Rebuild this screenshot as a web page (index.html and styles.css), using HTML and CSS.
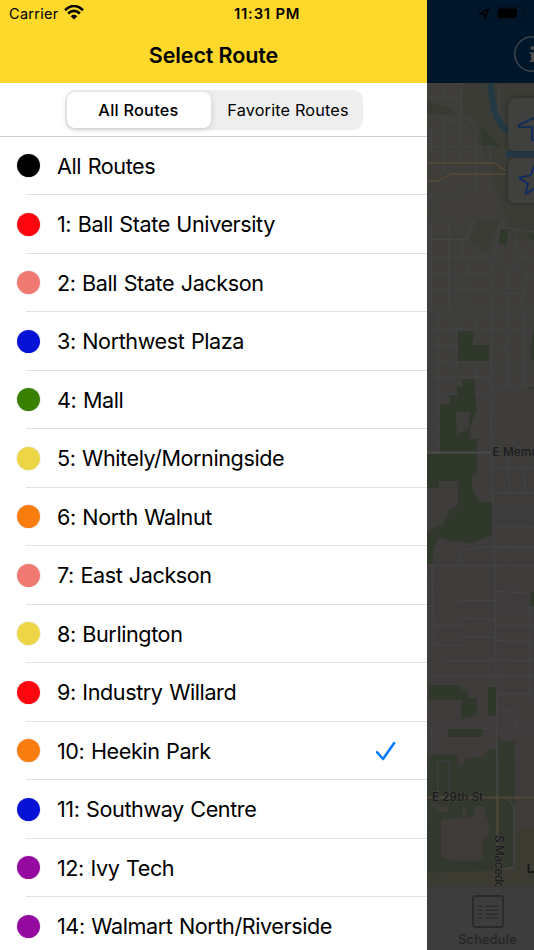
FILE: index.html
```html
<!DOCTYPE html>
<html lang="en">
<head>
<meta charset="utf-8">
<title>Select Route</title>
<link rel="stylesheet" href="styles.css">
</head>
<body>
<div class="screen">
  <aside class="drawer">
    <header class="header">
      <div class="status">
        <span class="carrier">Carrier</span>
        <svg class="wifi" viewBox="0 0 20 15" width="20" height="15">
          <path d="M1 5.2 Q10 -3.2 19 5.2 M4.1 8.5 Q10 3.1 15.9 8.5" fill="none" stroke="#000" stroke-width="2.6"/>
          <path d="M6.7 11.2 Q10 8.4 13.3 11.2 L10 14.5Z"/>
        </svg>
        <span class="time">11:31 PM</span>
      </div>
      <h1 class="title">Select Route</h1>
    </header>
    <div class="filter">
      <div class="segments">
        <button class="segment active"><span>All Routes</span></button>
        <button class="segment"><span>Favorite Routes</span></button>
      </div>
    </div>
    <ul class="routes">
      <li class="route"><i class="dot black"></i><span>All Routes</span></li>
      <li class="route"><i class="dot red"></i><span>1: Ball State University</span></li>
      <li class="route"><i class="dot pink"></i><span>2: Ball State Jackson</span></li>
      <li class="route"><i class="dot blue"></i><span>3: Northwest Plaza</span></li>
      <li class="route"><i class="dot green"></i><span>4: Mall</span></li>
      <li class="route"><i class="dot yellow"></i><span>5: Whitely/Morningside</span></li>
      <li class="route"><i class="dot orange"></i><span>6: North Walnut</span></li>
      <li class="route"><i class="dot pink"></i><span>7: East Jackson</span></li>
      <li class="route"><i class="dot yellow"></i><span>8: Burlington</span></li>
      <li class="route"><i class="dot red"></i><span>9: Industry Willard</span></li>
      <li class="route"><i class="dot orange"></i><span>10: Heekin Park</span>
        <svg class="check" viewBox="0 0 22 20" width="22" height="20"><path d="M2 11.2 L8 18 L19.2 2" fill="none" stroke="#007aff" stroke-width="2.5" stroke-linecap="round" stroke-linejoin="round"/></svg>
      </li>
      <li class="route"><i class="dot blue"></i><span>11: Southway Centre</span></li>
      <li class="route"><i class="dot purple"></i><span>12: Ivy Tech</span></li>
      <li class="route"><i class="dot purple"></i><span>14: Walmart North/Riverside</span></li>
    </ul>
  </aside>
  <main class="backdrop">
    <div class="navbar">
      <svg viewBox="427 0 107 83" width="107" height="83">
        <path d="M479.5 13.7 L488.8 9 L484.7 18.6 L484.2 14.2Z" fill="none" stroke="#000" stroke-width="1.5" stroke-linejoin="round"/>
        <rect x="496.3" y="6.8" width="27" height="13" rx="3.8" fill="none" stroke="#04101d" stroke-width="1.2"/>
        <rect x="498" y="8.5" width="19" height="9.6" rx="2" fill="#000"/>
        <path d="M525 11 Q528 13.3 525 15.8Z" fill="#04101d"/>
        <circle cx="532" cy="54" r="17.2" fill="none" stroke="#494b4e" stroke-width="1.3"/>
        <circle cx="532.3" cy="48" r="2" fill="#4b4d50"/>
        <path d="M529.5 52.3 H534 V62 H529.5 V60.5 H531 V53.8 H529.5Z" fill="#4b4d50"/>
      </svg>
    </div>
    <svg class="map" viewBox="427 83 107 803" width="107" height="803">
      <defs>
        <linearGradient id="land" x1="0" y1="0" x2="0" y2="1">
          <stop offset="0" stop-color="#3f3e3b"/><stop offset="1" stop-color="#3e3b3a"/>
        </linearGradient>
      </defs>
      <rect x="427" y="83" width="107" height="803" fill="url(#land)"/>
      <g fill="#363a31">
        <path d="M464 83 H534 V240 H512 L503 210 L482 150 L461 115Z" opacity=".55"/>
        <path d="M427 101 L445 107 L458 115 L427 114Z"/>
        <path d="M480 125 L500 147 H483Z" fill="#30392b"/>
        <path d="M479 220 H500 L488 252 L469 245 L471 232 L476 230Z" opacity=".6"/>
      </g>
      <path d="M490 83 L493 103 Q496 124 509 131 M506 154 H534" fill="none" stroke="#243946" stroke-width="6"/>
      <g fill="none" stroke="#444446" stroke-width="1">
        <path d="M431 97 H461 M445 97 V88 M461 83 V162 M464 117 L472 121 L476 129 V190 M444 121 H461 M444 121 V146 M431 130 H461 M431 130 V147 H495 M444 147 V171 L448 174 M490 148 V188 M499 83 V112 L508 124 M427 195 H451 L476 188 M431 205 L438 220"/>
        <path d="M443 220 L467 239 L491 259 L534 278 M473 220 L467 239 M427 239.500 H467 M427 257 H489 M427 274 H491 M427 290 H491 M427 312 H534 M427 329 H491 M427 345 H457 M427 362 H491 M427 377 H491 M427 394 H490 M431 220 V312 M449 220 V311 M462 240 V257 M469 257 V274 M464 274 V311 M491 258 V452 M438 312 V451 M456 312 V377 M474 312 L476 329 M476 363 V377 M501 220 L494 260 M501 227 L534 232 M517 229 L513 265 L507 275 V385 M534 239 L523 255 L515 269 M520 256 L534 262 M499 293 H522 M528 273 L519 311 M524 312 V385 M491 330 H524 M491 350 H507 M491 368 H534 M491 386 H534 M427 416 H438 M427 434 H438"/>
        <path d="M491 453 L493 507 L495 568 M492 468 H534 M508 453 V468 L510 493 M525 468 V493 M492 493 H534 M493 512 H534 M493 527 H534 M494 547 H534 M459 564 L462 550 L484 547 H534 M427 565.500 H534"/>
        <path d="M432 566 L434 644 M427 606 H434 M459 600.500 H496 M434 625.500 H460 L465 618 L496 619.500 M459 637 H496 M427 644.500 L462 645.500 M443 660.500 H534 M427 676 H534 M495 566 L497 797 M496 591.500 L530 593 V676 M496 608 H534 M496 625.500 H534 M497 640.500 L534 642 M530 676 V700 M497 694 H534 M497 709 L511 712 L518 729 M511 712 L518 708 M427 728 H534 M431 728 L432 745 L429 768"/>
      </g>
      <path d="M427 452.500 H491" stroke="#4b4b4b" stroke-width="2"/>
      <path d="M427 163 H494 L506 171 M427 181 H438 L451 174 H506" fill="none" stroke="#514737" stroke-width="1.8"/>
      <g fill="#30382c">
        <path d="M501 228.500 L508 230 L507 245.500 L498 244Z M530 232 L534 234 V240 L528 238Z"/>
        <path d="M458 331 H472 L474 337 L472 345 H489 V361 H458Z M534 327 V360 H532 L530 350Z M526 387 H534 V389 H528Z M530 592 H534 V606 H530Z"/>
        <path fill-rule="evenodd" d="M462 379 H475 V393 L477 410 L470 427 V439 H477 V474 L472 477 V487 L479 502 H492 V534 L474 543 L451 541 L438 537 L433 552 V564 H427 V533 L435 527 L439 524 L443 525 L450 509 L458 505 V481 H439 V488 H427 V454 H440 V405 L450 403 V395 H457 V387 H462Z M456 412 H469 V427 L457 435Z"/>
        <path d="M429 685 H461 V691 H468 V698 H477 V714 L461 719 V700 H429Z M488 687 H496 V716 H488Z M448 729 H482 V737 H448Z"/>
        <path d="M427 758 L438 754 L458 755 V765 H463 L465 759 L484 757 L486 751 L496 749 V886 H427Z M498 737 L504 741 L515 742 V797 H498Z M498 798 H515 V868 H498Z" opacity=".85"/>
      </g>
      <path d="M427 452.500 H491" stroke="#484948" stroke-width="2"/>
      <path d="M497 870 H534 V886 H427 V873Z M518 798 H534 V886 H515Z" fill="#3c3b32"/>
      <path d="M515 798 H534 V828 H515Z" fill="#3e3b3a"/>
      <path d="M443 819 L454 818 H463 V806 H466 V818 L474 817 V806 H485 V815 L490 824 L488 837 L483 840 V858 L478 861 H451 L441 857 V821Z M430 803 L440 804 L449 808 L447 812 H438Z" fill="#3e3b39"/>
      <path d="M438 793 V761 H449 V793" fill="none" stroke="#393c38" stroke-width="2"/>
      <path d="M497.500 750 V797" stroke="#444446" stroke-width="1.5"/>
      <path d="M497.500 797 V886 M427 797.500 H534" stroke="#514737" stroke-width="1.8"/>
      <path d="M508 798 L514 807 V867 L505 869" fill="none" stroke="#484849" stroke-width="1.3"/>
      <g class="map-labels">
        <text x="492.500" y="456" textLength="46">E Memo</text>
        <text x="432" y="801" textLength="51">E 29th St</text>
        <text transform="translate(494.500 835) rotate(90)" textLength="54">S Macedo</text>
      </g>
      <path d="M528.500 864 V872 H534" fill="none" stroke="#191919" stroke-width="2"/>
      <g class="map-button">
        <rect x="508" y="98" width="40" height="53" rx="7" fill="#40403f"/>
        <rect x="508" y="158" width="40" height="45" rx="7" fill="#40403f"/>
      </g>
      <g fill="none" stroke="#092b60" stroke-width="1.7" stroke-linejoin="round">
        <path d="M540 115 L519 125 V127 H532 V140 H536Z"/>
        <path d="M534.500 165 L530.500 175.500 L519 177.500 L528 184 L525.500 194 L534.500 188.500 L543.500 194 L541 184 L550 177.500 L538.500 175.500Z"/>
      </g>
    </svg>
    <nav class="tabbar">
      <svg viewBox="0 0 32 33" width="32" height="33" fill="none" stroke="#242424">
        <rect x="1" y="1" width="30" height="31" rx="2" stroke-width="1.3"/>
        <path d="M6.500 11.200 H10.500 M13 11.200 H26.500 M6.500 15.200 H10.500 M13 15.200 H26.500 M6.500 19.200 H10.500 M13 19.200 H26.500 M6.500 23 H10.500 M13 23 H26.500" stroke-width="1.1"/>
      </svg>
      <span>Schedule</span>
    </nav>
  </main>
</div>
</body>
</html>
```
FILE: styles.css
```css
* { box-sizing: border-box; }
body { margin: 0; background: #fff; font-family: Inter, "Liberation Sans", sans-serif; color: #000; }
.screen { display: grid; grid-template-columns: 427px 107px; width: 534px; height: 950px; overflow: hidden; }
.drawer { display: flex; flex-direction: column; min-width: 0; height: 950px; overflow: hidden; background: #fff; }
.header { height: 83px; flex: none; background: #fed82a; }
.status { display: flex; align-items: center; height: 27px; padding-left: 9px; font-size: 14.5px; }
.carrier { width: 55px; letter-spacing: .3px; }
.time { margin-left: 150px; font-weight: 600; font-size: 14.8px; letter-spacing: .8px; white-space: nowrap; }
.wifi { flex: none; margin-top: -2px; }
.title { margin: 0; font-size: 21.5px; font-weight: 600; line-height: 56px; text-align: center; letter-spacing: -.1px; }
.filter { display: flex; justify-content: center; flex: none; height: 53.5px; padding-top: 7px; border-bottom: 1px solid #cfcfd1; }
.segments { display: flex; width: 298px; height: 40px; padding: 2px; border-radius: 10px; background: #eeeeef; }
.segment { flex: 1; border: 0; border-radius: 8px; padding: 0 0 1px 5px; background: transparent; color: #000; font: 400 16.3px Inter, sans-serif; letter-spacing: .15px; white-space: nowrap; }
.segment.active { flex: 0 0 144px; padding-left: 0; background: #fff; font-weight: 500; letter-spacing: .25px; box-shadow: 0 2px 6px rgba(0,0,0,.15); }
.routes { margin: 0; padding: 0; list-style: none; }
.route { position: relative; display: flex; align-items: center; height: 58.5px; padding: 0 30px 0 17px; font-size: 21.6px; letter-spacing: -.42px; word-spacing: .9px; white-space: nowrap; }
.route::after { content: ""; position: absolute; left: 26px; right: 0; bottom: 0; height: 1px; background: #e1e1e2; }
.dot { width: 23px; height: 23px; margin-right: 17px; flex: none; border-radius: 50%; box-shadow: 0 0 0 1px #f1f1f3; }
.black { background: #000; }
.red { background: #fe0610; }
.pink { background: #f07972; }
.blue { background: #0613d6; }
.green { background: #3a8000; }
.yellow { background: #edd646; }
.orange { background: #f97c0e; }
.purple { background: #9509a1; }
.check { margin-left: auto; }
.backdrop { display: flex; flex-direction: column; min-width: 0; overflow: hidden; background: #3e3b3a; }
.navbar { height: 83px; flex: none; background: #00172b; }
.navbar svg, .map { display: block; }
.map-labels { fill: #1a1a1a; font-size: 11.8px; font-weight: 500; stroke: #41403e; stroke-width: 1.5px; paint-order: stroke; }
.map-button { filter: drop-shadow(0 0 2px rgba(0,0,0,.35)); }
.tabbar { display: flex; flex-direction: column; align-items: center; height: 64px; padding: 8px 0 0 14px; border-top: 1px solid #353535; background: #3d3d3d; color: #242424; font-size: 12.5px; font-weight: 500; letter-spacing: .35px; }
.tabbar svg { flex: none; margin-bottom: 4px; }
.tabbar span { line-height: 16px; }
```
